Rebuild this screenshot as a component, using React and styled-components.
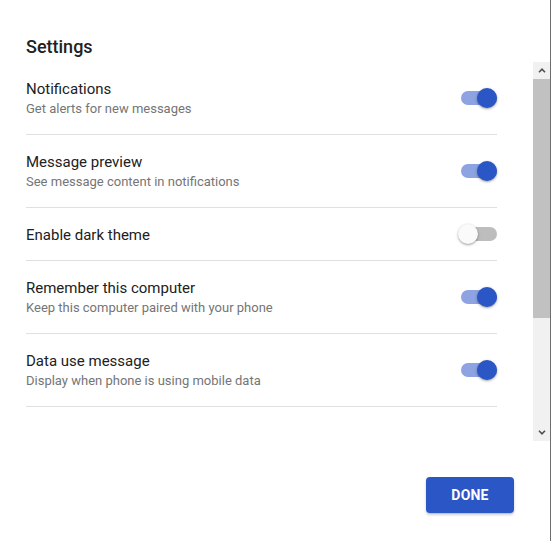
import React, { useState, useRef, useEffect } from "react";
import styled, { createGlobalStyle } from "styled-components";

const GlobalStyle = createGlobalStyle`
  html, body { margin: 0; padding: 0; background: #ffffff; }
  body { font-family: Roboto, "Noto Sans", Arial, sans-serif; -webkit-font-smoothing: antialiased; }
  * { box-sizing: border-box; }
`;

const Dialog = styled.div`
  width: 551px;
  height: 541px;
  background: #ffffff;
  border-right: 1px solid #6e6e6e;
  display: flex;
  flex-direction: column;
`;

const Title = styled.h2`
  margin: 0;
  padding: 35px 26px 0 26px;
  height: 62px;
  font-size: 18px;
  line-height: 24px;
  font-weight: 500;
  color: #212121;
`;

const Body = styled.div`
  height: 379px;
  display: flex;
`;

const ScrollArea = styled.div`
  flex: 1;
  height: 100%;
  overflow-y: scroll;
  padding: 0 36px 0 26px;
  scrollbar-width: none;
  &::-webkit-scrollbar { display: none; }
`;

const Scrollbar = styled.div`
  width: 17px;
  height: 100%;
  flex: none;
  display: flex;
  flex-direction: column;
  background: #f1f1f1;
`;

const ArrowButton = styled.div`
  height: 17px;
  flex: none;
  display: flex;
  align-items: center;
  justify-content: center;
  background: #f1f1f1;
  cursor: pointer;
`;

const ScrollTrack = styled.div`
  flex: 1;
  position: relative;
`;

const Thumb = styled.div`
  position: absolute;
  left: 0;
  right: 0;
  background: #c1c1c1;
`;

const List = styled.div`
  display: flex;
  flex-direction: column;
  padding-bottom: 203px;
`;

const Row = styled.div`
  display: flex;
  align-items: center;
  justify-content: space-between;
  padding: 16px 0 15px;
  border-bottom: 1px solid #e0e0e0;
  cursor: pointer;
`;

const Texts = styled.div`
  display: flex;
  flex-direction: column;
  padding-top: 1px;
`;

const RowTitle = styled.div`
  font-size: 15px;
  line-height: 20px;
  color: #212121;
`;

const RowSub = styled.div`
  font-size: 13px;
  line-height: 20px;
  color: #757575;
`;

const Switch = styled.div`
  position: relative;
  width: 39px;
  height: 20px;
  flex: none;
  margin-bottom: 1px;
`;

const Track = styled.div`
  position: absolute;
  left: 3px;
  right: 0;
  top: 3px;
  height: 14px;
  border-radius: 7px;
  background: ${(p) => (p.$on ? "#8da3e2" : "#bdbdbd")};
`;

const Knob = styled.div`
  position: absolute;
  top: 0;
  left: ${(p) => (p.$on ? "19px" : "0px")};
  width: 20px;
  height: 20px;
  border-radius: 50%;
  background: ${(p) => (p.$on ? "#2a56c6" : "#fafafa")};
  box-shadow: 0 1px 3px rgba(0, 0, 0, 0.3), 0 1px 1px rgba(0, 0, 0, 0.12);
`;

const Footer = styled.div`
  flex: 1;
  display: flex;
  justify-content: flex-end;
  align-items: flex-start;
  padding: 36px 36px 0 0;
`;

const DoneButton = styled.button`
  width: 88px;
  height: 36px;
  border: none;
  border-radius: 4px;
  background: #2a56c6;
  color: #ffffff;
  font-family: Roboto, Arial, sans-serif;
  font-size: 14px;
  font-weight: 700;
  letter-spacing: 0.2px;
  box-shadow: 0 2px 3px rgba(0, 0, 0, 0.18), 0 1px 1px rgba(0, 0, 0, 0.1);
  cursor: pointer;
`;

const Chevron = ({ up }) => (
  <svg width="8" height="5" viewBox="0 0 8 5">
    <path
      d={up ? "M1 4.2 L4 1.2 L7 4.2" : "M1 0.8 L4 3.8 L7 0.8"}
      fill="none"
      stroke="#505050"
      strokeWidth="1.6"
    />
  </svg>
);

const initial = [
  { id: "n", title: "Notifications", sub: "Get alerts for new messages", on: true },
  { id: "p", title: "Message preview", sub: "See message content in notifications", on: true },
  { id: "d", title: "Enable dark theme", on: false },
  { id: "r", title: "Remember this computer", sub: "Keep this computer paired with your phone", on: true },
  { id: "u", title: "Data use message", sub: "Display when phone is using mobile data", on: true },
];

export default function App() {
  const [items, setItems] = useState(initial);
  const [bar, setBar] = useState({ top: 0, height: 239 });
  const areaRef = useRef(null);
  const trackRef = useRef(null);

  const update = () => {
    const el = areaRef.current;
    const tr = trackRef.current;
    if (!el || !tr) return;
    const trackH = tr.clientHeight;
    const ratio = el.clientHeight / el.scrollHeight;
    const height = Math.round(trackH * ratio);
    const maxScroll = el.scrollHeight - el.clientHeight;
    const top = maxScroll > 0 ? Math.round((el.scrollTop / maxScroll) * (trackH - height)) : 0;
    setBar({ top, height });
  };

  useEffect(() => {
    update();
  }, []);

  const scrollBy = (dy) => {
    if (areaRef.current) areaRef.current.scrollBy({ top: dy });
  };

  const toggle = (id) =>
    setItems((list) => list.map((it) => (it.id === id ? { ...it, on: !it.on } : it)));

  return (
    <>
      <GlobalStyle />
      <Dialog>
        <Title>Settings</Title>
        <Body>
          <ScrollArea ref={areaRef} onScroll={update}>
            <List>
              {items.map((it) => (
                <Row key={it.id} onClick={() => toggle(it.id)}>
                  <Texts>
                    <RowTitle>{it.title}</RowTitle>
                    {it.sub && <RowSub>{it.sub}</RowSub>}
                  </Texts>
                  <Switch role="switch" aria-checked={it.on}>
                    <Track $on={it.on} />
                    <Knob $on={it.on} />
                  </Switch>
                </Row>
              ))}
            </List>
          </ScrollArea>
          <Scrollbar>
            <ArrowButton onClick={() => scrollBy(-40)}>
              <Chevron up />
            </ArrowButton>
            <ScrollTrack ref={trackRef}>
              <Thumb style={{ top: bar.top, height: bar.height }} />
            </ScrollTrack>
            <ArrowButton onClick={() => scrollBy(40)}>
              <Chevron />
            </ArrowButton>
          </Scrollbar>
        </Body>
        <Footer>
          <DoneButton>DONE</DoneButton>
        </Footer>
      </Dialog>
    </>
  );
}
